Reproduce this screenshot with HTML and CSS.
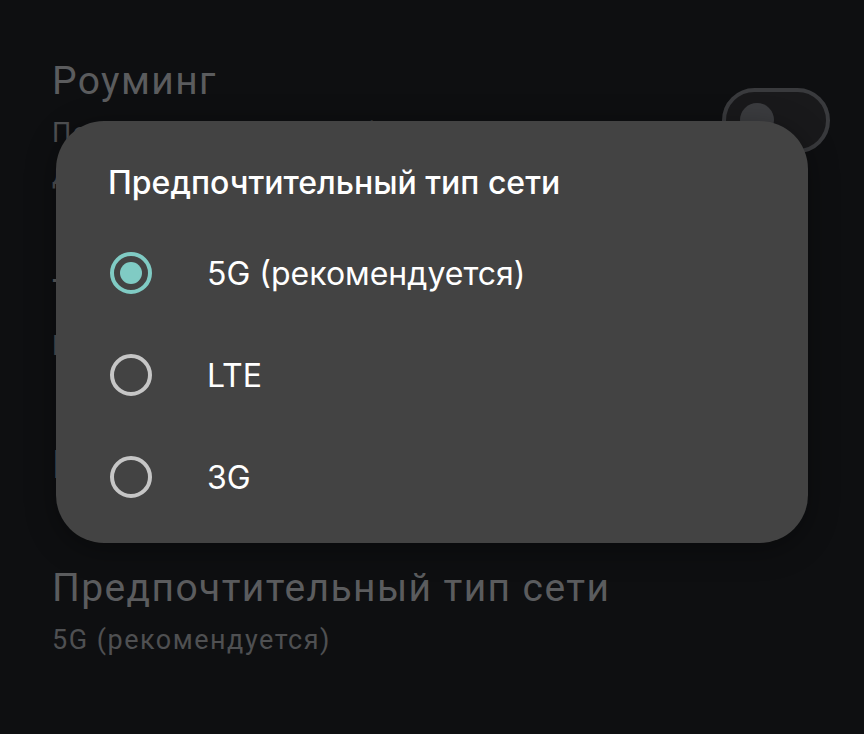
FILE: index.html
```html
<!DOCTYPE html>
<html lang="ru">
<head>
  <meta charset="UTF-8">
  <meta name="viewport" content="width=device-width, initial-scale=1.0">
  <title>Предпочтительный тип сети</title>
  <link rel="stylesheet" href="styles.css">
</head>
<body>
  <div class="screen">
    <!-- настройки под диалогом -->
    <ul class="settings">
      <li class="setting">
        <div class="setting-text">
          <div class="setting-title">Роуминг</div>
          <div class="setting-summary">Подключаться к службам передачи данных в роуминге</div>
        </div>
        <div class="switch"><span class="switch-thumb"></span></div>
      </li>
      <li class="setting">
        <div class="setting-text">
          <div class="setting-title">Трафик приложений</div>
          <div class="setting-summary">Всего использовано: 0 Б</div>
        </div>
      </li>
      <li class="setting">
        <div class="setting-text">
          <div class="setting-title">Предупреждения и лимит</div>
        </div>
      </li>
      <li class="setting">
        <div class="setting-text">
          <div class="setting-title">Предпочтительный тип сети</div>
          <div class="setting-summary">5G (рекомендуется)</div>
        </div>
      </li>
    </ul>

    <!-- диалог выбора -->
    <div class="dialog">
      <h2 class="dialog-title">Предпочтительный тип сети</h2>
      <ul class="options">
        <li class="option selected">
          <span class="radio"></span>
          <span class="option-label">5G (рекомендуется)</span>
        </li>
        <li class="option">
          <span class="radio"></span>
          <span class="option-label">LTE</span>
        </li>
        <li class="option">
          <span class="radio"></span>
          <span class="option-label">3G</span>
        </li>
      </ul>
    </div>
  </div>
</body>
</html>
```

FILE: styles.css
```css
/* экран */
body {
  margin: 0;
  background: #0e0f11;
  font-family: 'Roboto', 'Noto Sans', sans-serif;
}

.screen {
  position: relative;
  width: 864px;
  height: 734px;
  overflow: hidden;
}

/* список настроек */
.settings {
  list-style: none;
  margin: 0;
  padding: 20px 34px 0 52px;
}

.setting {
  display: flex;
  align-items: flex-start;
  padding: 36px 0 37px;
}

.setting-text {
  flex: 1;
}

.setting-title {
  font-size: 39px;
  line-height: 50px;
  letter-spacing: 1.4px;
  color: #5b5c5e;
}

.setting-summary {
  margin-top: 6px;
  font-size: 27px;
  line-height: 42px;
  letter-spacing: 1.5px;
  color: #4f5052;
  max-width: 600px;
}

.switch {
  position: relative;
  width: 100px;
  height: 57px;
  border: 4px solid #393a3d;
  border-radius: 40px;
  background: #19191b;
  margin: 32px 0 0 40px;
  flex: none;
}

.switch-thumb {
  position: absolute;
  left: 14px;
  top: 11px;
  width: 34px;
  height: 34px;
  border-radius: 50%;
  background: #3b3c3f;
}

/* диалог */
.dialog {
  position: absolute;
  left: 56px;
  top: 121px;
  width: 752px;
  height: 422px;
  box-sizing: border-box;
  padding: 38px 52px 0 54px;
  background: #434343;
  border-radius: 48px;
  box-shadow: 0 6px 30px rgba(0, 0, 0, 0.35);
  font-family: 'Inter', 'Roboto', sans-serif;
}

.dialog-title {
  margin: 0 0 0 -2px;
  font-size: 32px;
  line-height: 48px;
  font-weight: 500;
  color: #ffffff;
}

.options {
  list-style: none;
  margin: 15px 0 0;
  padding: 0;
}

.option {
  display: flex;
  align-items: center;
  height: 102px;
  gap: 57px;
}

.radio {
  width: 34px;
  height: 34px;
  border: 4px solid #c6c6c6;
  border-radius: 50%;
  flex: none;
  box-sizing: content-box;
  position: relative;
}

.option.selected .radio {
  border-color: #80cbc4;
}

.option.selected .radio::after {
  content: '';
  position: absolute;
  left: 6px;
  top: 6px;
  width: 22px;
  height: 22px;
  border-radius: 50%;
  background: #80cbc4;
}

.option-label {
  margin-left: -2px;
  font-size: 32px;
  color: #ffffff;
}
```
